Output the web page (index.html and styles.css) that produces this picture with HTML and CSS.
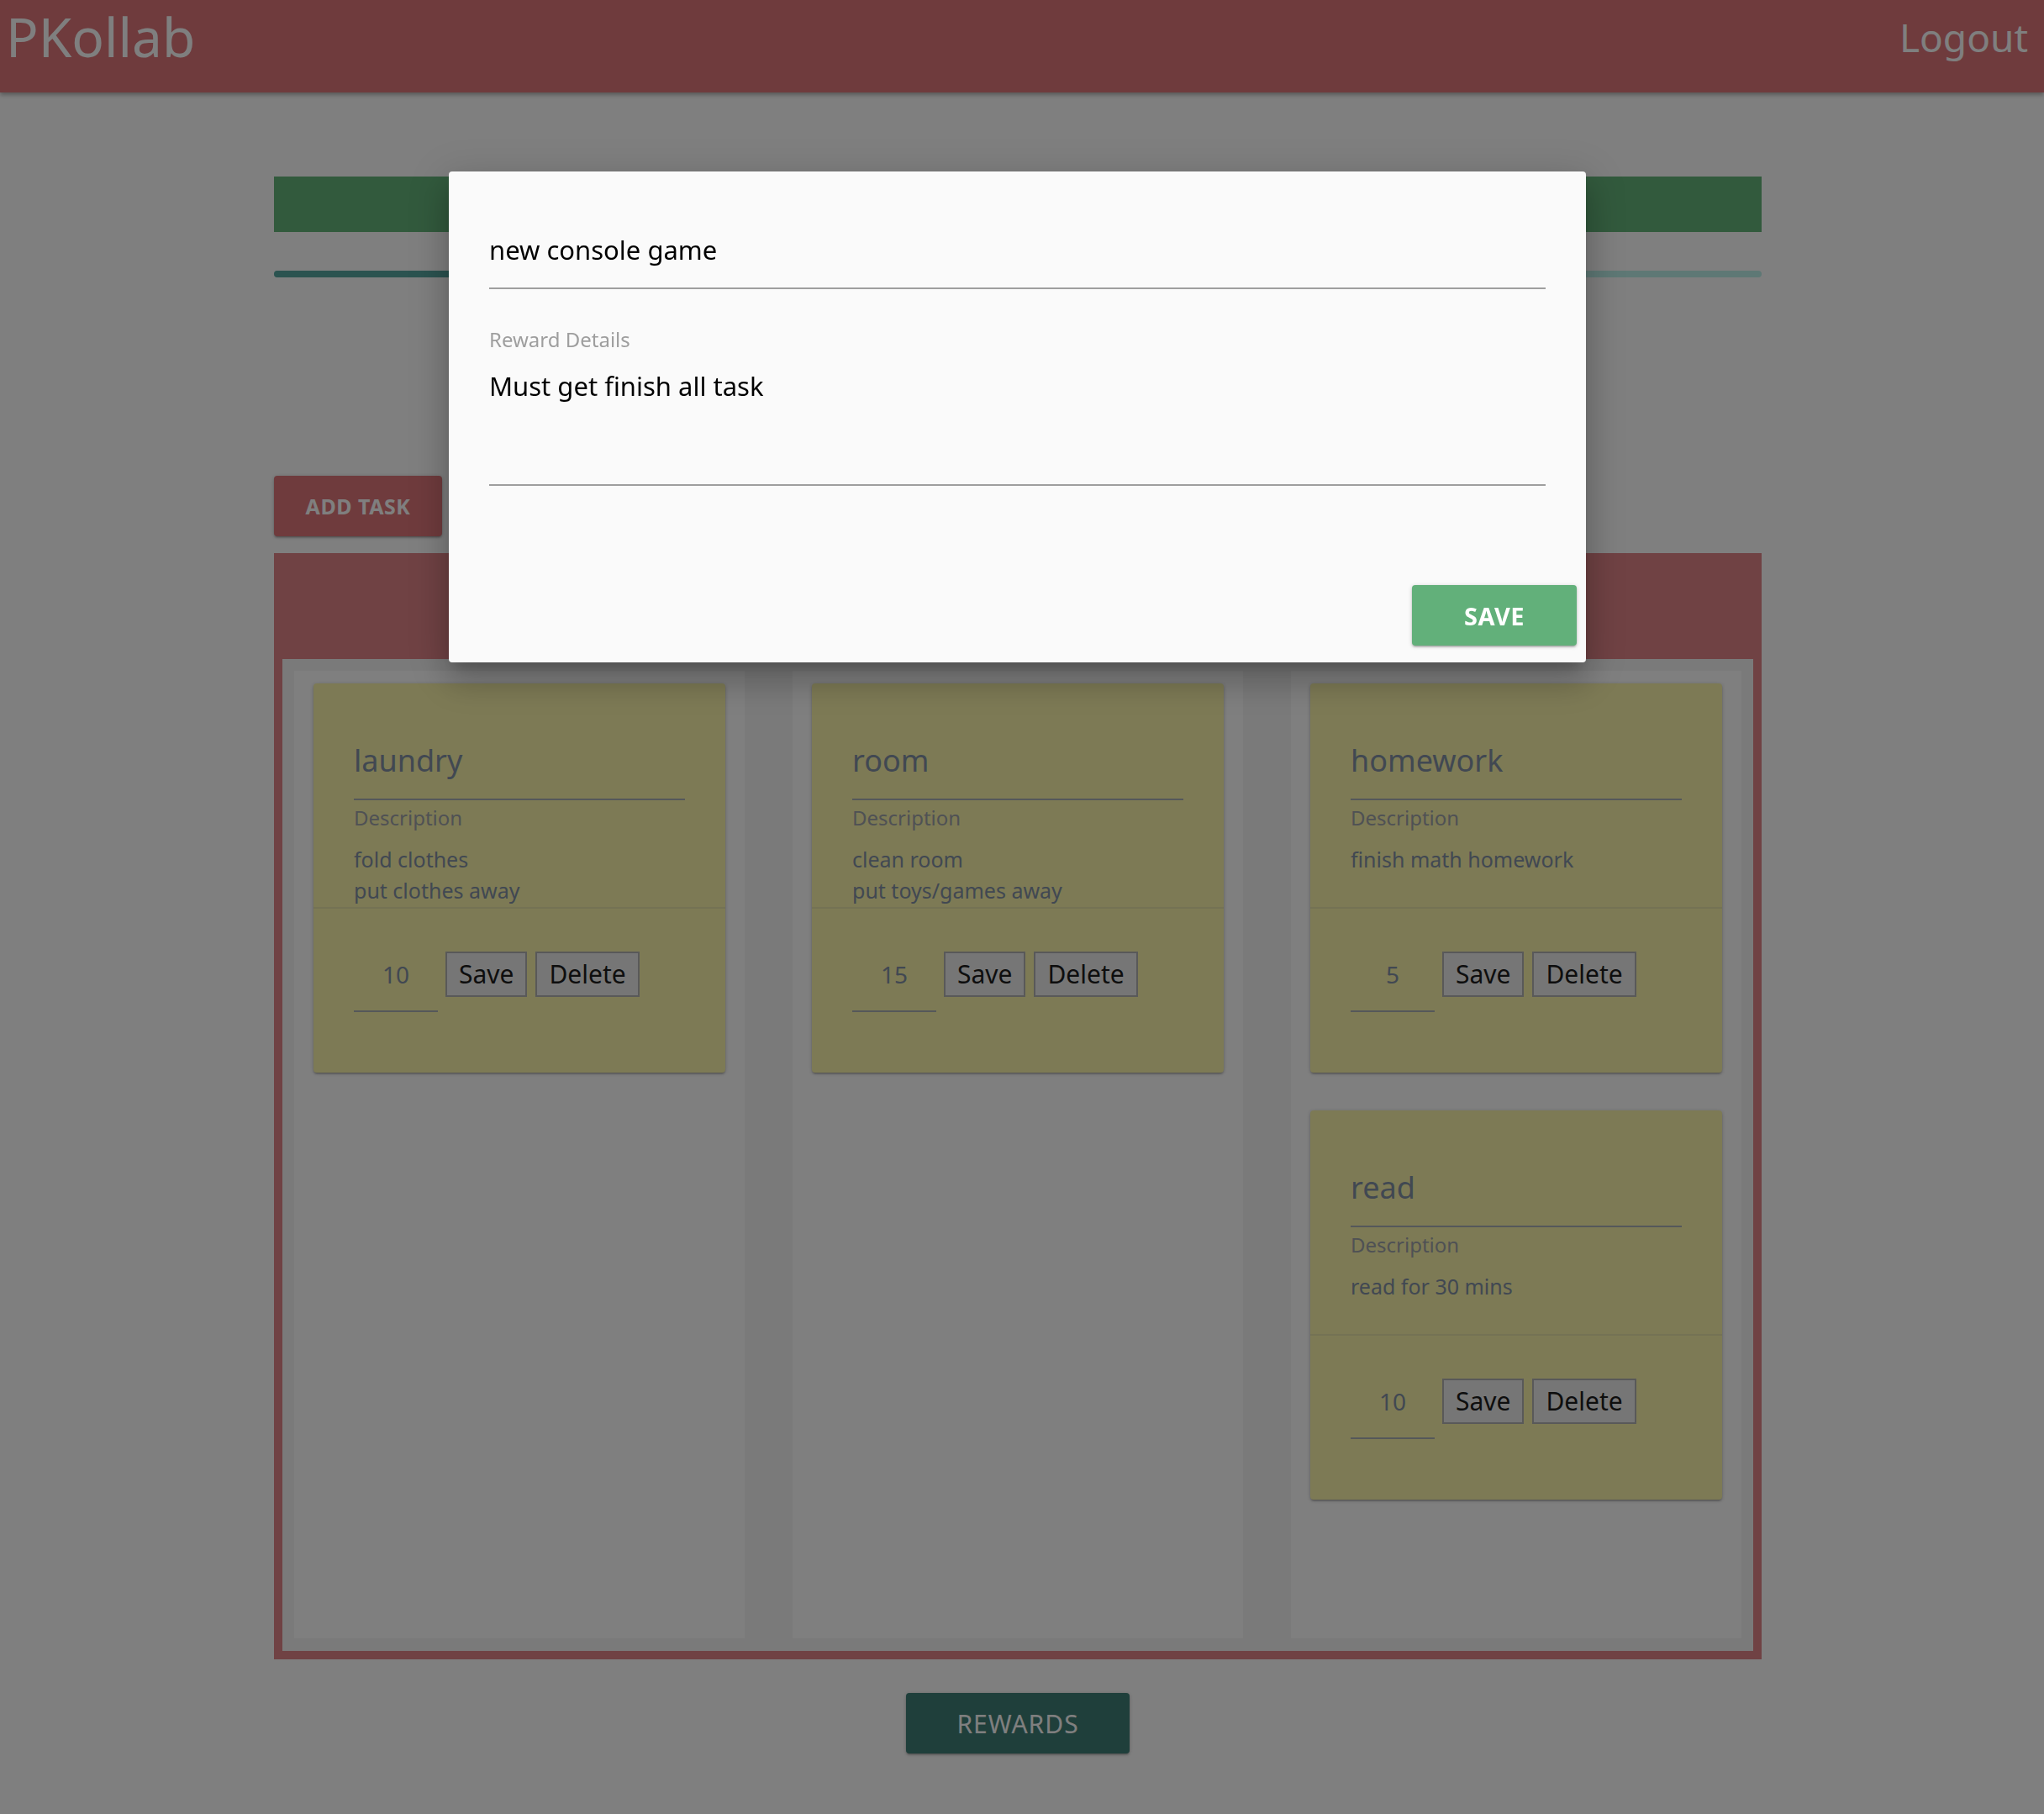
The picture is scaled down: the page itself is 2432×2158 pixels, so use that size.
FILE: index.html
```html
<!DOCTYPE html>
<html lang="en">
<head>
<meta charset="utf-8">
<title>PKollab</title>
<link rel="stylesheet" href="styles.css">
</head>
<body>
<header class="nav">
  <span class="brand">PKollab</span>
  <span class="logout">Logout</span>
</header>
<main class="container">
  <div class="banner"></div>
  <div class="progress"><div class="determinate" style="width:50%"></div></div>
  <button class="btn btn-add">ADD TASK</button>
  <section class="board">
    <div class="board-body">
      <div class="col">
        <div class="card">
          <div class="card-content">
            <div class="card-title">laundry</div>
            <div class="card-label">Description</div>
            <div class="card-desc">fold clothes<br>put clothes away</div>
          </div>
          <div class="card-action">
            <div class="points">10</div>
            <button class="act-btn act-save">Save</button>
            <button class="act-btn act-del">Delete</button>
          </div>
        </div>
      </div>
      <div class="col">
        <div class="card">
          <div class="card-content">
            <div class="card-title">room</div>
            <div class="card-label">Description</div>
            <div class="card-desc">clean room<br>put toys/games away</div>
          </div>
          <div class="card-action">
            <div class="points">15</div>
            <button class="act-btn act-save">Save</button>
            <button class="act-btn act-del">Delete</button>
          </div>
        </div>
      </div>
      <div class="col">
        <div class="card">
          <div class="card-content">
            <div class="card-title">homework</div>
            <div class="card-label">Description</div>
            <div class="card-desc">finish math homework</div>
          </div>
          <div class="card-action">
            <div class="points">5</div>
            <button class="act-btn act-save">Save</button>
            <button class="act-btn act-del">Delete</button>
          </div>
        </div>
        <div class="card">
          <div class="card-content">
            <div class="card-title">read</div>
            <div class="card-label">Description</div>
            <div class="card-desc">read for 30 mins</div>
          </div>
          <div class="card-action">
            <div class="points">10</div>
            <button class="act-btn act-save">Save</button>
            <button class="act-btn act-del">Delete</button>
          </div>
        </div>
      </div>
    </div>
  </section>
  <div class="rewards-row"><button class="btn btn-rewards">REWARDS</button></div>
</main>
<div class="overlay"></div>
<div class="modal">
  <div class="modal-content">
    <div class="m-input">new console game</div>
    <div class="m-label">Reward Details</div>
    <div class="m-textarea">Must get finish all task</div>
  </div>
  <div class="modal-footer">
    <button class="btn btn-save">SAVE</button>
  </div>
</div>
</body>
</html>
```
FILE: styles.css
```css
html, body {
  margin: 0;
  padding: 0;
}
body {
  background: #ffffff;
  font-family: "Noto Sans", "Open Sans", "DejaVu Sans", sans-serif;
  height: 2158px;
  overflow: hidden;
  position: relative;
}
.nav {
  height: 110px;
  background: #de767a;
  display: flex;
  justify-content: space-between;
  align-items: flex-start;
  padding: 0 19px 0 7px;
  box-shadow: 0 3px 5px rgba(0, 0, 0, 0.3);
  color: #ffffff;
}
.brand {
  font-size: 64px;
  line-height: normal;
}
.logout {
  font-size: 46px;
  line-height: normal;
  padding-top: 13px;
}
.container {
  margin-left: 326px;
  width: 1770px;
}
.banner {
  margin-top: 100px;
  height: 66px;
  background: #64b47a;
}
.progress {
  margin-top: 46px;
  height: 8px;
  border-radius: 4px;
  background: #bcf0ea;
  overflow: hidden;
}
.determinate {
  height: 100%;
  background: #56a6a0;
}
.btn {
  border: none;
  font-family: "Noto Sans", "Open Sans", sans-serif;
  color: #ffffff;
  border-radius: 4px;
  box-shadow: 0 2px 2px 0 rgba(0,0,0,.14), 0 3px 1px -2px rgba(0,0,0,.12), 0 1px 5px 0 rgba(0,0,0,.2);
  padding: 0;
  cursor: pointer;
}
.btn-add {
  display: block;
  margin-top: 236px;
  width: 200px;
  height: 72px;
  background: #de767a;
  font-size: 25px;
  font-weight: 700;
  letter-spacing: 0.5px;
}
.board {
  margin-top: 20px;
  background: #e08488;
  padding: 126px 10px 10px;
}
.board-body {
  background: #f5f5f5;
  padding: 14px 14px 15px;
  display: grid;
  grid-template-columns: repeat(3, 536px);
  column-gap: 57px;
}
.col {
  background: #ffffff;
  height: 1151px;
  padding-top: 15px;
  box-sizing: border-box;
}
.card {
  width: 490px;
  height: 463px;
  margin: 0 auto 45px;
  background: #fbf5ab;
  border-radius: 4px;
  box-shadow: 0 2px 2px 0 rgba(0,0,0,.14), 0 3px 1px -2px rgba(0,0,0,.12), 0 1px 5px 0 rgba(0,0,0,.2);
  display: flex;
  flex-direction: column;
  box-sizing: border-box;
}
.card-content {
  height: 266px;
  padding: 0 48px;
  box-sizing: border-box;
}
.card-title {
  padding-top: 67px;
  line-height: 50px;
  font-size: 36px;
  padding-bottom: 20px;
  border-bottom: 2px solid #aab0b4;
  color: #8290a4;
}
.card-label {
  margin-top: 6px;
  line-height: 30px;
  font-size: 24px;
  color: #9ea2a8;
}
.card-desc {
  padding-top: 16px;
  line-height: 37px;
  font-size: 25px;
  color: #8290a4;
}
.card-action {
  flex: 1;
  border-top: 2px solid rgba(160, 160, 160, 0.2);
  padding: 51px 48px 0;
  display: flex;
  align-items: flex-start;
}
.points {
  width: 100px;
  height: 54px;
  line-height: 54px;
  text-align: center;
  font-size: 28px;
  padding-bottom: 16px;
  border-bottom: 2px solid #aab0b4;
  color: #8290a4;
}
.act-btn {
  height: 54px;
  border: 2px solid #b2b2b2;
  background: #ececec;
  color: #1c1c1c;
  font-family: "Noto Sans", "Open Sans", sans-serif;
  font-size: 30px;
  line-height: 50px;
  padding: 0 14px;
  border-radius: 0;
}
.act-save {
  margin-left: 9px;
}
.act-del {
  margin-left: 10px;
}
.rewards-row {
  margin-top: 40px;
  display: flex;
  justify-content: center;
}
.btn-rewards {
  width: 266px;
  height: 72px;
  background: #3e7e76;
  font-size: 30px;
  letter-spacing: 1px;
}
.overlay {
  position: fixed;
  inset: 0;
  background: rgba(0, 0, 0, 0.5);
  z-index: 10;
}
.modal {
  position: absolute;
  left: 534px;
  top: 204px;
  width: 1353px;
  height: 584px;
  background: #fafafa;
  border-radius: 4px;
  z-index: 20;
  display: flex;
  flex-direction: column;
  box-sizing: border-box;
  box-shadow: 0 24px 38px 3px rgba(0,0,0,.14), 0 9px 46px 8px rgba(0,0,0,.12), 0 11px 15px -7px rgba(0,0,0,.2);
}
.modal-content {
  padding: 73px 48px 0;
}
.m-input {
  font-size: 31px;
  line-height: 40px;
  padding-bottom: 25px;
  border-bottom: 2px solid #9e9e9e;
  color: #000000;
}
.m-label {
  margin-top: 45px;
  font-size: 24px;
  line-height: 30px;
  color: #9e9e9e;
}
.m-textarea {
  margin-top: 20px;
  font-size: 31px;
  line-height: 40px;
  padding-bottom: 97px;
  border-bottom: 2px solid #9e9e9e;
  color: #000000;
}
.modal-footer {
  margin-top: auto;
  display: flex;
  justify-content: flex-end;
  padding: 0 11px 20px 0;
}
.btn-save {
  width: 196px;
  height: 72px;
  background: #62b07a;
  font-size: 29px;
  font-weight: 700;
  letter-spacing: 0.5px;
}
```
